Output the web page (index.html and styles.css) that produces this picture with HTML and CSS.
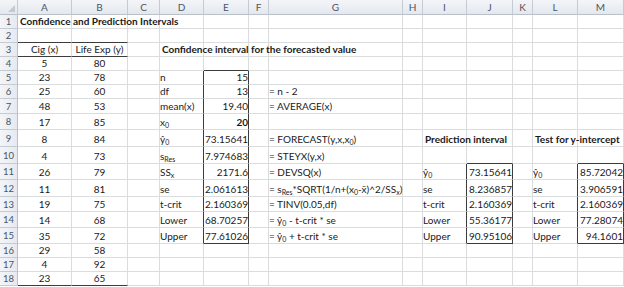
FILE: index.html
```html
<!DOCTYPE html>
<html>
<head>
<meta charset="utf-8">
<link rel="stylesheet" href="styles.css">
</head>
<body>
<table class="sheet">
<colgroup>
<col class="c-rh"><col class="c-a"><col class="c-b"><col class="c-c"><col class="c-d"><col class="c-e"><col class="c-f"><col class="c-g"><col class="c-h"><col class="c-i"><col class="c-j"><col class="c-k"><col class="c-l"><col class="c-m">
</colgroup>
<tr class="hdr h15">
<td class="corner"><span class="tri"></span></td><td>A</td><td>B</td><td>C</td><td>D</td><td>E</td><td>F</td><td>G</td><td>H</td><td>I</td><td>J</td><td>K</td><td>L</td><td>M</td>
</tr>
<tr class="h14"><td class="rh">1</td><td class="b ov" colspan="1"><span class="over">Confidence and Prediction Intervals</span></td><td></td><td></td><td></td><td></td><td></td><td></td><td></td><td></td><td></td><td></td><td></td><td></td></tr>
<tr class="h14"><td class="rh">2</td><td class="tb"></td><td class="tb"></td><td></td><td></td><td></td><td></td><td></td><td></td><td></td><td></td><td></td><td></td><td></td></tr>
<tr class="h14"><td class="rh">3</td><td class="c tb">Cig (x)</td><td class="c tb">Life Exp (y)</td><td></td><td class="b ov"><span class="over">Confidence interval for the forecasted value</span></td><td></td><td></td><td></td><td></td><td></td><td></td><td></td><td></td><td></td></tr>
<tr class="h14"><td class="rh">4</td><td class="c">5</td><td class="c">80</td><td></td><td></td><td class="tb"></td><td></td><td></td><td></td><td></td><td></td><td></td><td></td><td></td></tr>
<tr class="h14"><td class="rh">5</td><td class="c">23</td><td class="c">78</td><td></td><td class="l rb">n</td><td class="r rb">15</td><td></td><td></td><td></td><td></td><td></td><td></td><td></td><td></td></tr>
<tr class="h14"><td class="rh">6</td><td class="c">25</td><td class="c">60</td><td></td><td class="l rb">df</td><td class="r rb">13</td><td></td><td class="l">= n - 2</td><td></td><td></td><td></td><td></td><td></td><td></td></tr>
<tr class="h15"><td class="rh">7</td><td class="c">48</td><td class="c">53</td><td></td><td class="l rb">mean(x)</td><td class="r rb">19.40</td><td></td><td class="l">= AVERAGE(x)</td><td></td><td></td><td></td><td></td><td></td><td></td></tr>
<tr class="h16"><td class="rh">8</td><td class="c">17</td><td class="c">85</td><td></td><td class="l rb">x<sub>0</sub></td><td class="r rb b">20</td><td></td><td></td><td></td><td></td><td></td><td></td><td></td><td></td></tr>
<tr class="h17"><td class="rh">9</td><td class="c">8</td><td class="c">84</td><td></td><td class="l rb">ŷ<sub>0</sub></td><td class="r rb">73.15641</td><td></td><td class="l">= FORECAST(y,x,x<sub>0</sub>)</td><td></td><td class="b ov"><span class="over">Prediction interval</span></td><td></td><td></td><td class="b ov"><span class="over">Test for y-intercept</span></td><td></td></tr>
<tr class="h17"><td class="rh">10</td><td class="c">4</td><td class="c">73</td><td></td><td class="l rb">s<sub>Res</sub></td><td class="r rb">7.974683</td><td></td><td class="l">= STEYX(y,x)</td><td></td><td></td><td class="tb"></td><td></td><td></td><td class="tb"></td></tr>
<tr class="h16"><td class="rh">11</td><td class="c">26</td><td class="c">79</td><td></td><td class="l rb">SS<sub>x</sub></td><td class="r rb">2171.6</td><td></td><td class="l">= DEVSQ(x)</td><td></td><td class="l rb">ŷ<sub>0</sub></td><td class="r rb">73.15641</td><td></td><td class="l rb">ŷ<sub>0</sub></td><td class="r rb">85.72042</td></tr>
<tr class="h17"><td class="rh">12</td><td class="c">11</td><td class="c">81</td><td></td><td class="l rb">se</td><td class="r rb">2.061613</td><td></td><td class="l">= s<sub>Res</sub>*SQRT(1/n+(x<sub>0</sub>-x̄)^2/SS<sub>x</sub>)</td><td></td><td class="l rb">se</td><td class="r rb">8.236857</td><td></td><td class="l rb">se</td><td class="r rb">3.906591</td></tr>
<tr class="h15"><td class="rh">13</td><td class="c">19</td><td class="c">75</td><td></td><td class="l rb">t-crit</td><td class="r rb">2.160369</td><td></td><td class="l">= TINV(0.05,df)</td><td></td><td class="l rb">t-crit</td><td class="r rb">2.160369</td><td></td><td class="l rb">t-crit</td><td class="r rb">2.160369</td></tr>
<tr class="h16"><td class="rh">14</td><td class="c">14</td><td class="c">68</td><td></td><td class="l rb">Lower</td><td class="r rb">68.70257</td><td></td><td class="l ind">= ŷ<sub>0</sub> - t-crit * se</td><td></td><td class="l rb">Lower</td><td class="r rb">55.36177</td><td></td><td class="l rb">Lower</td><td class="r rb">77.28074</td></tr>
<tr class="h16"><td class="rh">15</td><td class="c">35</td><td class="c">72</td><td></td><td class="l rb">Upper</td><td class="r rb tb">77.61026</td><td></td><td class="l ind">= ŷ<sub>0</sub> + t-crit * se</td><td></td><td class="l rb">Upper</td><td class="r rb tb">90.95106</td><td></td><td class="l rb">Upper</td><td class="r rb tb">94.1601</td></tr>
<tr class="h14"><td class="rh">16</td><td class="c">29</td><td class="c">58</td><td></td><td></td><td></td><td></td><td></td><td></td><td></td><td></td><td></td><td></td><td></td></tr>
<tr class="h14"><td class="rh">17</td><td class="c">4</td><td class="c">92</td><td></td><td></td><td></td><td></td><td></td><td></td><td></td><td></td><td></td><td></td><td></td></tr>
<tr class="h14"><td class="rh">18</td><td class="c tb">23</td><td class="c tb">65</td><td></td><td></td><td></td><td></td><td></td><td></td><td></td><td></td><td></td><td></td><td></td></tr>
</table>
</body>
</html>
```
FILE: styles.css
```css
html, body {
  margin: 0;
  padding: 0;
  background: #ffffff;
}
.sheet {
  border-collapse: separate;
  border-spacing: 0;
  table-layout: fixed;
  width: 624px;
  font-family: Lato, "Liberation Sans", sans-serif;
  font-size: 10px;
  color: #1a1a1a;
}
.c-rh { width: 18px; }
.c-a { width: 54px; }
.c-b { width: 56px; }
.c-c { width: 32px; }
.c-d { width: 44px; }
.c-e { width: 45px; }
.c-f { width: 20px; }
.c-g { width: 134px; }
.c-h { width: 20px; }
.c-i { width: 44px; }
.c-j { width: 46px; }
.c-k { width: 20px; }
.c-l { width: 45px; }
.c-m { width: 46px; }
.sheet td {
  padding: 0;
  border-right: 1px solid #dadcdd;
  border-bottom: 1px solid #dadcdd;
  white-space: nowrap;
  overflow: visible;
  line-height: 11px;
  vertical-align: bottom;
  padding-bottom: 1px;
  box-sizing: border-box;
}
.h14 { height: 14px; }
.h15 { height: 15px; }
.h16 { height: 16px; }
.h17 { height: 17px; }
.hdr td {
  background: linear-gradient(#f3f5f8, #e4e8ee);
  border-right: 1px solid #c5cbd3;
  border-bottom: 1px solid #b9c0c9;
  text-align: center;
  color: #4a5566;
  vertical-align: middle;
  padding-bottom: 0;
}
.sheet td.rh {
  background: linear-gradient(90deg, #f3f5f8, #e6eaf0);
  border-right: 1px solid #b9c0c9;
  border-bottom: 1px solid #c5cbd3;
  text-align: center;
  color: #4a5566;
  font-size: 9.5px;
  vertical-align: middle;
  padding-bottom: 0;
}
.corner {
  position: relative;
}
.tri {
  position: absolute;
  right: 2px;
  bottom: 2px;
  width: 0;
  height: 0;
  border-left: 7px solid transparent;
  border-bottom: 7px solid #c3c9d1;
}
.ov {
  position: relative;
}
.over {
  position: absolute;
  left: 2px;
  bottom: 1px;
  white-space: nowrap;
}
.b { font-weight: bold; }
.c { text-align: center; }
.l { text-align: left; padding-left: 2px; }
.r { text-align: right; padding-right: 2px; }
.ind { padding-left: 4px; }
.sheet td.rb { border-right-color: #3c3c3c; }
.sheet td.tb { border-bottom-color: #3c3c3c; }
sub {
  font-size: 7px;
  line-height: 0;
  vertical-align: -2px;
}
```
